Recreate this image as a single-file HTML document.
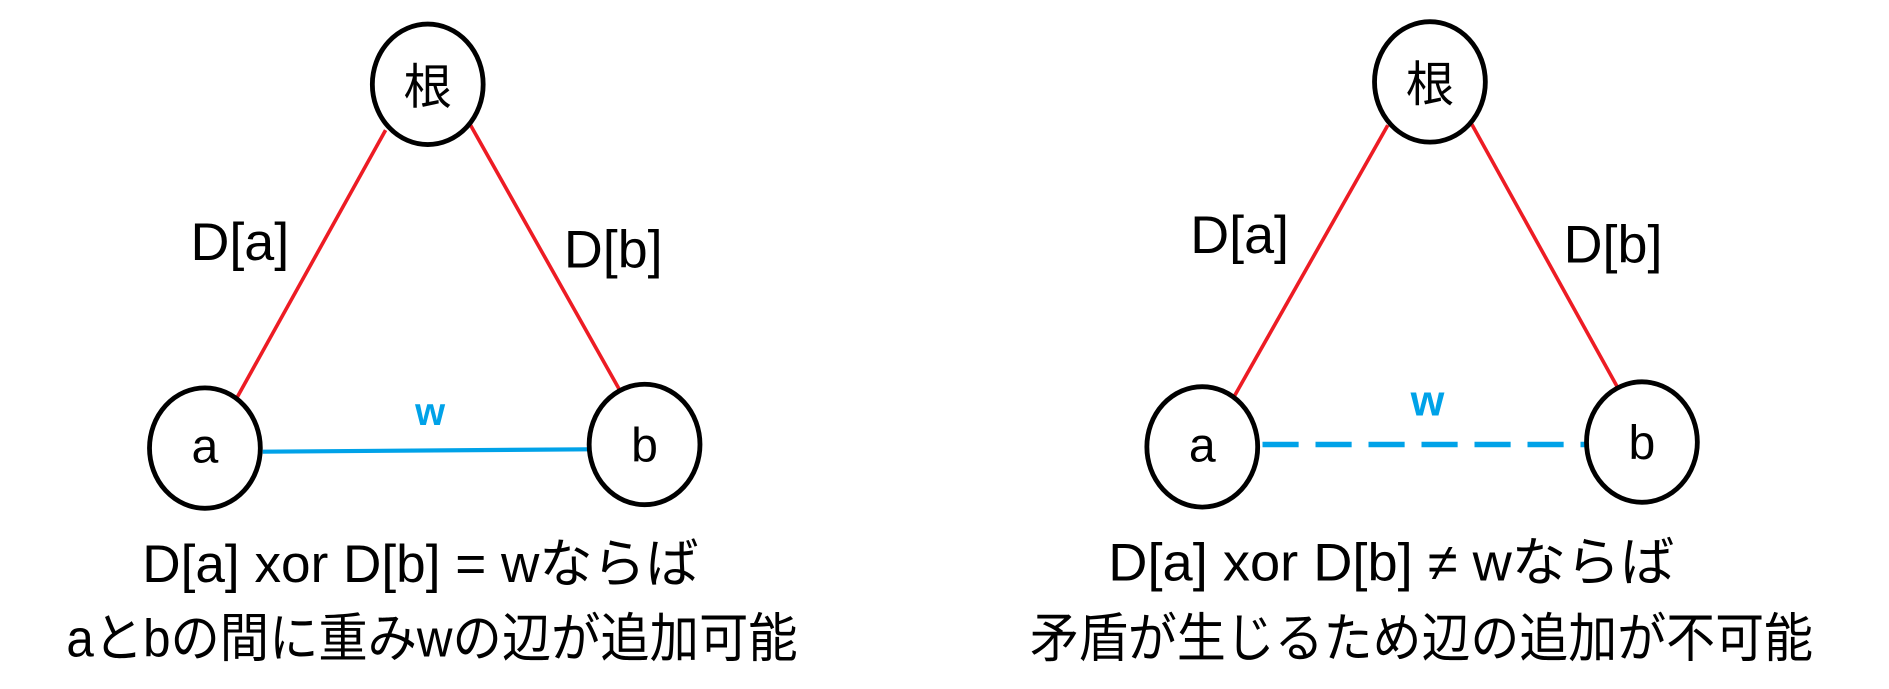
<!DOCTYPE html>
<html><head><meta charset="utf-8"><style>html,body{margin:0;padding:0;background:#fff}svg{display:block}</style></head>
<body>
<svg width="1889" height="689" viewBox="0 0 1568 572" xmlns="http://www.w3.org/2000/svg" font-family="'Liberation Sans','Noto Sans CJK JP',sans-serif">
<rect width="1568" height="572" fill="#fff"/>
<g stroke="#ed1c24" stroke-width="3">
<line x1="320" y1="108" x2="195" y2="333"/>
<line x1="390" y1="103" x2="515" y2="325"/>
<line x1="1152" y1="104" x2="1024" y2="330"/>
<line x1="1220" y1="100" x2="1343" y2="322"/>
</g>
<line x1="218" y1="375" x2="488" y2="373" stroke="#00a2e8" stroke-width="3.5"/>
<line x1="1048" y1="369" x2="1318" y2="369" stroke="#00a2e8" stroke-width="4.5" stroke-dasharray="30 14"/>
<g fill="#fff" stroke="#000" stroke-width="4">
<ellipse cx="355" cy="70" rx="46" ry="50"/>
<ellipse cx="170" cy="372" rx="46" ry="50"/>
<ellipse cx="535" cy="369" rx="46" ry="50"/>
<ellipse cx="1187" cy="68" rx="46" ry="50"/>
<ellipse cx="998" cy="371" rx="46" ry="50"/>
<ellipse cx="1363" cy="367" rx="46" ry="50"/>
</g>
<g font-size="40" text-anchor="middle" fill="#000">
<text x="355" y="86">根</text>
<text x="170" y="384">a</text>
<text x="535" y="383">b</text>
<text x="1187" y="84">根</text>
<text x="998" y="383">a</text>
<text x="1363" y="381">b</text>
</g>
<text x="357" y="353" font-size="32" font-weight="bold" fill="#00a2e8" text-anchor="middle">w</text>
<text x="1185" y="345" font-size="36" font-weight="bold" fill="#00a2e8" text-anchor="middle">w</text>
<g font-size="44" fill="#000">
<text x="158" y="216" textLength="82" lengthAdjust="spacingAndGlyphs">D[a]</text>
<text x="468" y="222" textLength="82" lengthAdjust="spacingAndGlyphs">D[b]</text>
<text x="988" y="210" textLength="82" lengthAdjust="spacingAndGlyphs">D[a]</text>
<text x="1298" y="218" textLength="82" lengthAdjust="spacingAndGlyphs">D[b]</text>
<text x="118" y="483" textLength="462" lengthAdjust="spacingAndGlyphs">D[a] xor D[b] = wならば</text>
<text x="55" y="545" textLength="607" lengthAdjust="spacingAndGlyphs">aとbの間に重みwの辺が追加可能</text>
<text x="920" y="482" textLength="470" lengthAdjust="spacingAndGlyphs">D[a] xor D[b] ≠ wならば</text>
<text x="855" y="545" textLength="650" lengthAdjust="spacingAndGlyphs">矛盾が生じるため辺の追加が不可能</text>
</g>
</svg>
</body></html>
